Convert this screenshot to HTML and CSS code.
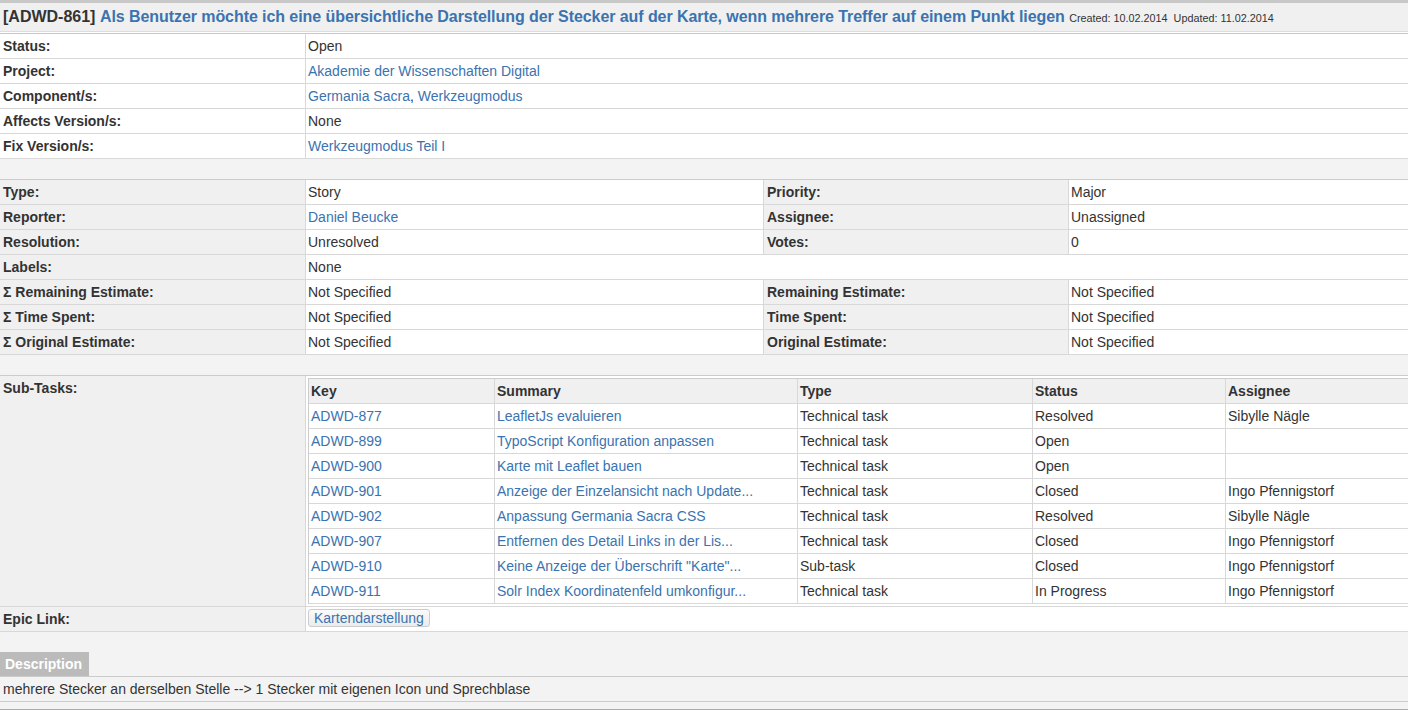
FILE: index.html
```html
<!DOCTYPE html>
<html lang="de">
<head>
<meta charset="utf-8">
<title>[ADWD-861] Als Benutzer möchte ich eine übersichtliche Darstellung der Stecker auf der Karte</title>
<link rel="stylesheet" href="styles.css">
</head>
<body>
<div class="topbar"></div>
<div class="header">
  <h1 class="title"><span class="key">[ADWD-861]</span> <a href="#" class="link tlink">Als Benutzer möchte ich eine übersichtliche Darstellung der Stecker auf der Karte, wenn mehrere Treffer auf einem Punkt liegen</a> <span class="dates">Created: 10.02.2014&nbsp; Updated: 11.02.2014</span></h1>
</div>

<table class="grid first">
  <colgroup><col class="c-label"><col></colgroup>
  <tr><td class="lbl">Status:</td><td class="val">Open</td></tr>
  <tr><td class="lbl">Project:</td><td class="val"><a href="#" class="link">Akademie der Wissenschaften Digital</a></td></tr>
  <tr><td class="lbl">Component/s:</td><td class="val"><a href="#" class="link">Germania Sacra</a>, <a href="#" class="link">Werkzeugmodus</a></td></tr>
  <tr><td class="lbl">Affects Version/s:</td><td class="val">None</td></tr>
  <tr><td class="lbl">Fix Version/s:</td><td class="val"><a href="#" class="link">Werkzeugmodus Teil I</a></td></tr>
</table>

<div class="gap"></div>

<table class="grid second">
  <colgroup><col class="c-label"><col class="c-val1"><col class="c-label2"><col></colgroup>
  <tr><td class="lbl gray">Type:</td><td class="val">Story</td><td class="lbl gray sep">Priority:</td><td class="val">Major</td></tr>
  <tr><td class="lbl gray">Reporter:</td><td class="val"><a href="#" class="link">Daniel Beucke</a></td><td class="lbl gray sep">Assignee:</td><td class="val">Unassigned</td></tr>
  <tr><td class="lbl gray">Resolution:</td><td class="val">Unresolved</td><td class="lbl gray sep">Votes:</td><td class="val">0</td></tr>
  <tr><td class="lbl gray">Labels:</td><td class="val" colspan="3">None</td></tr>
  <tr><td class="lbl gray">Σ Remaining Estimate:</td><td class="val">Not Specified</td><td class="lbl gray sep">Remaining Estimate:</td><td class="val">Not Specified</td></tr>
  <tr><td class="lbl gray">Σ Time Spent:</td><td class="val">Not Specified</td><td class="lbl gray sep">Time Spent:</td><td class="val">Not Specified</td></tr>
  <tr><td class="lbl gray">Σ Original Estimate:</td><td class="val">Not Specified</td><td class="lbl gray sep">Original Estimate:</td><td class="val">Not Specified</td></tr>
</table>

<div class="gap"></div>

<table class="grid third">
  <colgroup><col class="c-label"><col></colgroup>
  <tr>
    <td class="lbl gray top">Sub-Tasks:</td>
    <td class="val sub-cell">
      <table class="subtasks">
        <colgroup><col class="s-key"><col class="s-sum"><col class="s-type"><col class="s-status"><col class="s-assignee"></colgroup>
        <tr class="head"><th>Key</th><th>Summary</th><th>Type</th><th>Status</th><th>Assignee</th></tr>
        <tr><td><a href="#" class="link">ADWD-877</a></td><td><a href="#" class="link">LeafletJs evaluieren</a></td><td>Technical task</td><td>Resolved</td><td>Sibylle Nägle</td></tr>
        <tr><td><a href="#" class="link">ADWD-899</a></td><td><a href="#" class="link">TypoScript Konfiguration anpassen</a></td><td>Technical task</td><td>Open</td><td></td></tr>
        <tr><td><a href="#" class="link">ADWD-900</a></td><td><a href="#" class="link">Karte mit Leaflet bauen</a></td><td>Technical task</td><td>Open</td><td></td></tr>
        <tr><td><a href="#" class="link">ADWD-901</a></td><td><a href="#" class="link">Anzeige der Einzelansicht nach Update...</a></td><td>Technical task</td><td>Closed</td><td>Ingo Pfennigstorf</td></tr>
        <tr><td><a href="#" class="link">ADWD-902</a></td><td><a href="#" class="link">Anpassung Germania Sacra CSS</a></td><td>Technical task</td><td>Resolved</td><td>Sibylle Nägle</td></tr>
        <tr><td><a href="#" class="link">ADWD-907</a></td><td><a href="#" class="link">Entfernen des Detail Links in der Lis...</a></td><td>Technical task</td><td>Closed</td><td>Ingo Pfennigstorf</td></tr>
        <tr><td><a href="#" class="link">ADWD-910</a></td><td><a href="#" class="link">Keine Anzeige der Überschrift "Karte"...</a></td><td>Sub-task</td><td>Closed</td><td>Ingo Pfennigstorf</td></tr>
        <tr><td><a href="#" class="link">ADWD-911</a></td><td><a href="#" class="link">Solr Index Koordinatenfeld umkonfigur...</a></td><td>Technical task</td><td>In Progress</td><td>Ingo Pfennigstorf</td></tr>
      </table>
    </td>
  </tr>
  <tr><td class="lbl gray">Epic Link:</td><td class="val"><a href="#" class="link epic">Kartendarstellung</a></td></tr>
</table>

<div class="desc">
  <div class="desc-head">Description</div>
  <div class="desc-body">mehrere Stecker an derselben Stelle --&gt; 1 Stecker mit eigenen Icon und Sprechblase</div>
  <div class="desc-end"></div>
</div>
</body>
</html>
```
FILE: styles.css
```css
html, body {
  margin: 0;
  padding: 0;
}
body {
  background: #ffffff;
  font-family: "Liberation Sans", Arial, sans-serif;
  font-size: 14px;
  color: #333333;
  overflow: hidden;
  width: 1408px;
  height: 714px;
}
.link {
  color: #3b73af;
  text-decoration: none;
}
.topbar {
  height: 3px;
  background: #c8c8c8;
}
.header {
  height: 28px;
  background: #f0f0f0;
  border-bottom: 1px solid #dddddd;
  margin-bottom: 1px;
}
.title {
  margin: 0;
  padding: 0 3px;
  font-size: 16px;
  font-weight: bold;
  line-height: 28px;
  white-space: nowrap;
}
.title .key {
  color: #333333;
}
.tlink {
  letter-spacing: -0.07px;
}
.dates {
  font-weight: normal;
  font-size: 10.8px;
  color: #333333;
}
.grid {
  width: 100%;
  table-layout: fixed;
  border-collapse: separate;
  border-spacing: 0;
  border-top: 1px solid #cccccc;
  background: #ffffff;
}
.first {
  border-top-color: #c8c8c8;
}
.c-label { width: 305px; }
.c-val1 { width: 458px; }
.c-label2 { width: 305px; }
.grid > tbody > tr > td {
  height: 24px;
  padding: 0;
  border-bottom: 1px solid #d8d8d8;
  vertical-align: middle;
  line-height: 24px;
  white-space: nowrap;
}
.grid td.lbl {
  font-weight: bold;
  padding-left: 3px;
}
.grid td.lbl.gray {
  background: #f0f0f0;
}
.grid td.sep {
  border-left: 1px solid #d8d8d8;
}
.grid td.val {
  border-left: 1px solid #d8d8d8;
  padding-left: 2px;
}
.grid td.top {
  vertical-align: top;
}
.gap {
  height: 20px;
  background: #f3f3f3;
}
.grid > tbody > tr > td.sub-cell {
  padding: 2px 0 2px 2px;
  vertical-align: top;
  overflow: visible;
}
.subtasks {
  table-layout: fixed;
  width: 1116px;
  border-collapse: separate;
  border-spacing: 0;
  border-top: 1px solid #cccccc;
  border-left: 1px solid #cccccc;
  background: #ffffff;
}
.s-key { width: 185px; }
.s-sum { width: 303px; }
.s-type { width: 235px; }
.s-status { width: 193px; }
.s-assignee { width: 200px; }
.subtasks th,
.subtasks td {
  height: 24px;
  line-height: 24px;
  padding: 0 0 0 2px;
  border-bottom: 1px solid #d8d8d8;
  text-align: left;
  white-space: nowrap;
  overflow: hidden;
}
.subtasks th + th,
.subtasks td + td {
  border-left: 1px solid #d8d8d8;
}
.subtasks .head th {
  background: #f0f0f0;
  font-weight: bold;
  color: #333333;
}
.epic {
  display: inline-block;
  height: 16px;
  line-height: 16px;
  padding: 0 5px;
  margin-top: 2px;
  vertical-align: top;
  border: 1px solid #cccccc;
  border-radius: 3px;
  background: linear-gradient(#fafafa, #ececec);
}
.desc {
  background: #f3f3f3;
  padding-top: 20px;
}
.desc-head {
  display: inline-block;
  vertical-align: top;
  height: 24px;
  line-height: 24px;
  padding: 0 7px 0 5px;
  background: #bbbbbb;
  color: #ffffff;
  font-weight: bold;
}
.desc-body {
  border-top: 1px solid #cccccc;
  border-bottom: 1px solid #cccccc;
  height: 24px;
  line-height: 24px;
  padding-left: 3px;
}
.desc-end {
  height: 7px;
  border-bottom: 1px solid #aaaaaa;
}
```
